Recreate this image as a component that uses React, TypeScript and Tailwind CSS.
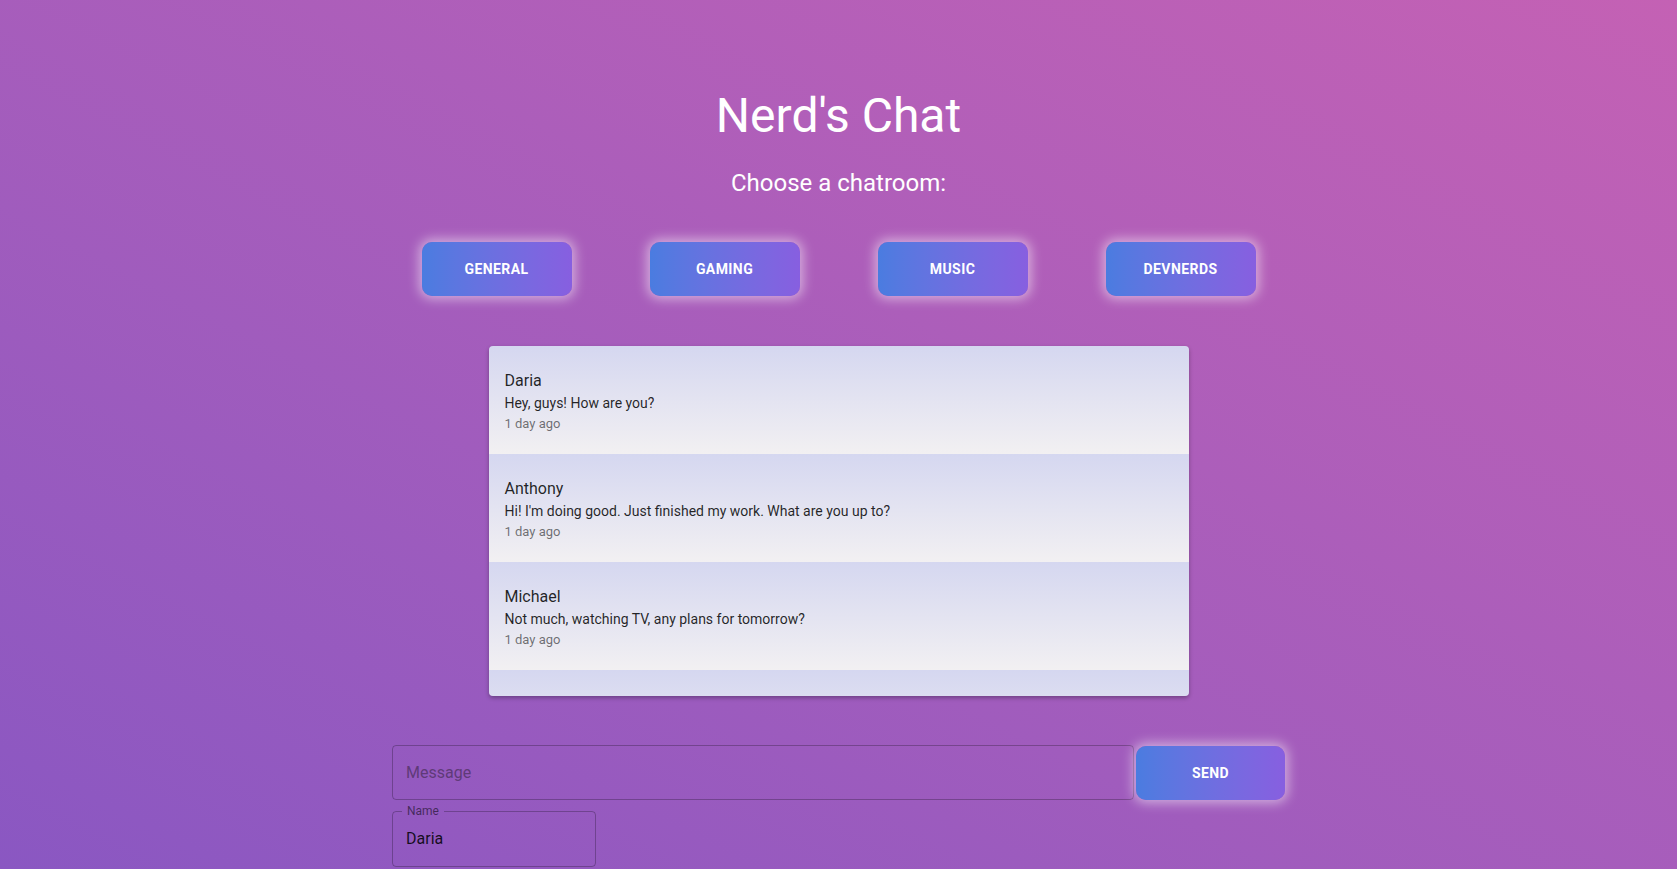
import { useState } from "react";

interface Message {
  name: string;
  text: string;
  time: string;
}

const rooms = ["General", "Gaming", "Music", "DevNerds"];

const messages: Message[] = [
  { name: "Daria", text: "Hey, guys! How are you?", time: "1 day ago" },
  {
    name: "Anthony",
    text: "Hi! I'm doing good. Just finished my work. What are you up to?",
    time: "1 day ago",
  },
  {
    name: "Michael",
    text: "Not much, watching TV, any plans for tomorrow?",
    time: "1 day ago",
  },
];

const App: React.FC = () => {
  const [message, setMessage] = useState("");
  const [name, setName] = useState("Daria");

  return (
    <div className="min-h-screen bg-linear-to-tr from-[#8a57c2] to-[#c461b4] font-['Roboto',sans-serif] flex flex-col items-center overflow-hidden">
      <h1 className="mt-[88px] text-[48px] leading-[56px] text-white font-normal">
        Nerd's Chat
      </h1>
      <h2 className="mt-[23px] text-[24px] leading-[32px] text-white font-normal">
        Choose a chatroom:
      </h2>

      <div className="mt-[43px] flex gap-[78px]">
        {rooms.map((room) => (
          <button
            key={room}
            className="w-[150px] h-[54px] rounded-[10px] bg-linear-to-r from-[#4a7ce0] to-[#875fe0] text-white text-sm font-bold uppercase tracking-[0.03em] shadow-[0_0_12px_3px_rgba(255,255,255,0.5)]"
          >
            {room}
          </button>
        ))}
      </div>

      <div className="mt-[50px] w-[700px] h-[350px] rounded overflow-hidden shadow-[0_2px_4px_rgba(0,0,0,0.3)]">
        {messages.map((m, i) => (
          <div
            key={i}
            className="h-[108px] px-4 pt-[23px] bg-linear-to-b from-[#d5d7f0] to-[#f2f0f2]"
          >
            <div className="text-base leading-6 text-black/85">{m.name}</div>
            <div className="text-sm leading-5 text-black/85">{m.text}</div>
            <div className="mt-[1px] text-[13px] leading-5 text-black/55">
              {m.time}
            </div>
          </div>
        ))}
        <div className="h-[108px] bg-linear-to-b from-[#d5d7f0] to-[#f2f0f2]" />
      </div>

      <div className="mt-[49px] w-[893px]">
        <div className="flex gap-[2px] items-center">
          <input
            type="text"
            value={message}
            onChange={(e) => setMessage(e.target.value)}
            placeholder="Message"
            className="w-[742px] h-[55px] px-[13px] rounded border border-black/25 bg-transparent text-base text-black/85 placeholder:text-[#5f3a78] outline-none"
          />
          <button className="w-[149px] h-[54px] rounded-[10px] bg-linear-to-r from-[#4a7ce0] to-[#875fe0] text-white text-sm font-bold uppercase tracking-[0.03em] shadow-[0_0_12px_3px_rgba(255,255,255,0.5)]">
            Send
          </button>
        </div>
        <fieldset className="mt-[5px] w-[204px] rounded border border-black/25 pl-[9px] pr-[14px] pt-[10px] pb-[15px]">
          <legend className="px-[5px] text-xs leading-3 text-black/55">
            Name
          </legend>
          <input
            type="text"
            value={name}
            onChange={(e) => setName(e.target.value)}
            className="w-full pl-[4px] bg-transparent text-base leading-6 text-black/85 outline-none"
          />
        </fieldset>
      </div>
    </div>
  );
};

export default App;
